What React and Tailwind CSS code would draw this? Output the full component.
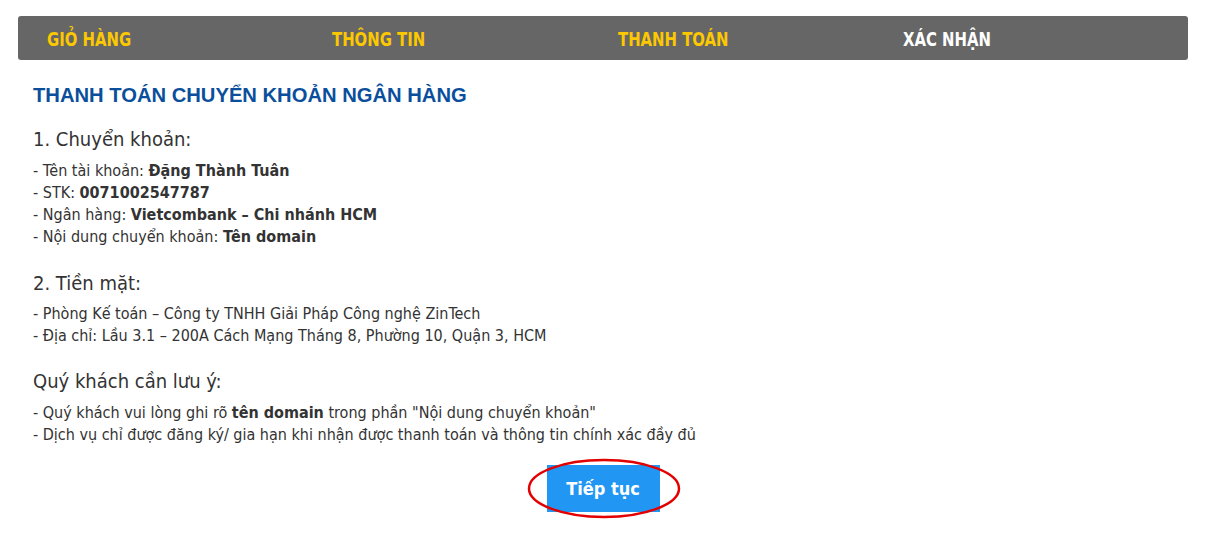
const steps = [
  { label: "GIỎ HÀNG", active: false },
  { label: "THÔNG TIN", active: false },
  { label: "THANH TOÁN", active: false },
  { label: "XÁC NHẬN", active: true },
];

const body = { fontFamily: '"DejaVu Sans Condensed", Tahoma, "Liberation Sans", sans-serif' };

const App = () => {
  return (
    <div className="bg-white min-h-[540px] pt-[16px]" style={body}>
      <div className="ml-[18px] w-[1170px]">
        {/* thanh bước */}
        <div className="h-[44px] bg-[#666666] rounded-[3px] flex items-center pl-[29px] pt-[5px]">
          {steps.map((s) => (
            <div key={s.label} className="w-[285.5px]">
              <span
                className={`inline-block origin-left scale-x-[0.87] text-[19px] font-bold leading-none ${
                  s.active ? "text-white" : "text-[#fcc800]"
                }`}
              >
                {s.label}
              </span>
            </div>
          ))}
        </div>

        <div className="pl-[15px] text-[#333333]">
          <h1
            className="mt-[21px] text-[20.2px] leading-[28px] font-bold text-[#0b4f9c]"
            style={{ fontFamily: '"Liberation Sans", Arial, sans-serif' }}
          >
            THANH TOÁN CHUYỂN KHOẢN NGÂN HÀNG
          </h1>

          <h2 className="mt-[16px] text-[20px] leading-[28px]">1. Chuyển khoản:</h2>
          <div className="mt-[7px] text-[16px] leading-[22px]">
            <p>
              - Tên tài khoản: <b>Đặng Thành Tuân</b>
            </p>
            <p>
              - STK: <b>0071002547787</b>
            </p>
            <p>
              - Ngân hàng: <b>Vietcombank – Chi nhánh HCM</b>
            </p>
            <p>
              - Nội dung chuyển khoản: <b>Tên domain</b>
            </p>
          </div>

          <h2 className="mt-[21px] text-[20px] leading-[28px]">2. Tiền mặt:</h2>
          <div className="mt-[6px] text-[16px] leading-[22px]">
            <p>- Phòng Kế toán – Công ty TNHH Giải Pháp Công nghệ ZinTech</p>
            <p>- Địa chỉ: Lầu 3.1 – 200A Cách Mạng Tháng 8, Phường 10, Quận 3, HCM</p>
          </div>

          <h2 className="mt-[20px] text-[20px] leading-[28px]">Quý khách cần lưu ý:</h2>
          <div className="mt-[7px] text-[16px] leading-[22px]">
            <p>
              - Quý khách vui lòng ghi rõ <b>tên domain</b> trong phần "Nội dung chuyển khoản"
            </p>
            <p>- Dịch vụ chỉ được đăng ký/ gia hạn khi nhận được thanh toán và thông tin chính xác đầy đủ</p>
          </div>
        </div>

        <div className="mt-[19px] flex justify-center">
          <div className="relative">
            <button className="w-[113px] h-[47px] bg-[#2196f3] text-white text-[18px] font-bold">
              Tiếp tục
            </button>
            <svg
              className="absolute left-[-20px] top-[-7px] pointer-events-none"
              width="154"
              height="61"
              viewBox="0 0 154 61"
            >
              <ellipse cx="77" cy="30.5" rx="75" ry="28.5" fill="none" stroke="#e30000" strokeWidth="2.5" />
            </svg>
          </div>
        </div>
      </div>
    </div>
  );
};

export default App;
